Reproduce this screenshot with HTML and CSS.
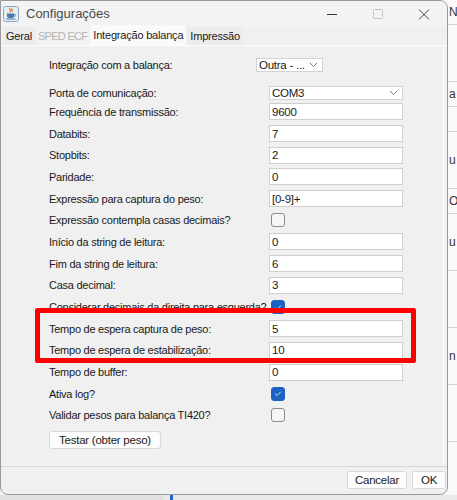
FILE: index.html
```html
<!DOCTYPE html>
<html>
<head>
<meta charset="utf-8">
<link rel="stylesheet" href="styles.css">
</head>
<body>
<div class="desktop">
  <div class="top">
    <div class="window">
      <div class="titlebar">
        <div class="appicon">
          <svg width="16" height="16" viewBox="0 0 16 16">
            <rect x="0.5" y="0.5" width="15" height="15" rx="2" fill="#e4ecf4" stroke="#8da6c0"/>
            <path d="M7 2 C6 3.5 8.5 4 7.2 6.2 M9 2.5 C8.2 3.7 10 4.2 9 5.8" stroke="#e0651b" stroke-width="1.1" fill="none"/>
            <path d="M4 7.5 H11 V10 C11 11.6 9.5 12 7.5 12 C5.5 12 4 11.6 4 10 Z" fill="#4a7ab0"/>
            <path d="M11 8.3 C13 8.2 13 10.5 10.8 10.6" stroke="#4a7ab0" stroke-width="1" fill="none"/>
            <path d="M3 13 H12.5" stroke="#4a7ab0" stroke-width="1"/>
          </svg>
        </div>
        <span class="title">Configurações</span>
        <div class="controls">
          <svg class="ctl" width="46" height="24" viewBox="0 0 46 24"><path d="M18 12.5 H28" stroke="#333" stroke-width="1"/></svg>
          <svg class="ctl" width="46" height="24" viewBox="0 0 46 24"><rect x="18.5" y="7.5" width="9" height="9" rx="1" fill="none" stroke="#c4c4c4"/></svg>
          <svg class="ctl" width="46" height="24" viewBox="0 0 46 24"><path d="M18 7.5 L28 17.5 M28 7.5 L18 17.5" stroke="#444" stroke-width="1"/></svg>
        </div>
      </div>
      <div class="tabs">
        <span class="tab">Geral</span>
        <span class="tab disabled">SPED ECF</span>
        <span class="tab active">Integração balança</span>
        <span class="tab">Impressão</span>
      </div>
      <div class="panel">
        <div class="row first">
          <span class="label wide">Integração com a balança:</span>
          <span class="combo small">Outra - ...<svg class="chev" width="9" height="6" viewBox="0 0 9 6"><path d="M1 1 L4.5 4.5 L8 1" stroke="#777" fill="none"/></svg></span>
        </div>
        <div class="form">
          <div class="row tight"><span class="label">Porta de comunicação:</span><span class="combo">COM3<svg class="chev" width="9" height="6" viewBox="0 0 9 6"><path d="M1 1 L4.5 4.5 L8 1" stroke="#777" fill="none"/></svg></span></div>
          <div class="row"><span class="label">Frequência de transmissão:</span><span class="field">9600</span></div>
          <div class="row"><span class="label">Databits:</span><span class="field">7</span></div>
          <div class="row"><span class="label">Stopbits:</span><span class="field">2</span></div>
          <div class="row"><span class="label">Paridade:</span><span class="field">0</span></div>
          <div class="row"><span class="label">Expressão para captura do peso:</span><span class="field">[0-9]+</span></div>
          <div class="row"><span class="label">Expressão contempla casas decimais?</span><span class="check"></span></div>
          <div class="row"><span class="label">Início da string de leitura:</span><span class="field">0</span></div>
          <div class="row"><span class="label">Fim da string de leitura:</span><span class="field">6</span></div>
          <div class="row"><span class="label">Casa decimal:</span><span class="field">3</span></div>
          <div class="row"><span class="label">Considerar decimais da direita para esquerda?</span><span class="check on"><svg width="13" height="13" viewBox="0 0 13 13"><path d="M3.5 6.8 L5.5 8.7 L9.5 4.6" stroke="#fff" stroke-width="0.9" fill="none"/></svg></span></div>
          <div class="row"><span class="label">Tempo de espera captura de peso:</span><span class="field">5</span></div>
          <div class="row"><span class="label">Tempo de espera de estabilização:</span><span class="field">10</span></div>
          <div class="row"><span class="label">Tempo de buffer:</span><span class="field">0</span></div>
          <div class="row"><span class="label">Ativa log?</span><span class="check on"><svg width="13" height="13" viewBox="0 0 13 13"><path d="M3.5 6.8 L5.5 8.7 L9.5 4.6" stroke="#fff" stroke-width="0.9" fill="none"/></svg></span></div>
          <div class="row"><span class="label">Validar pesos para balança TI420?</span><span class="check"></span></div>
        </div>
        <div class="testrow"><span class="btn test">Testar (obter peso)</span></div>
        <div class="highlight"></div>
      </div>
      <div class="footer">
        <span class="btn cancel">Cancelar</span>
        <span class="btn ok">OK</span>
      </div>
    </div>
    <div class="behind">
      <div class="bline">N</div>
      <div class="bline tall"></div>
      <div class="bline">a</div>
      <div class="bline"></div>
      <div class="bline tall">u</div>
      <div class="bline">O</div>
      <div class="bline tall">u</div>
      <div class="bline tall"></div>
      <div class="bline tall">n</div>
      <div class="bline tall"></div>
    </div>
  </div>
  <div class="bottom"><span class="mark"></span></div>
</div>
</body>
</html>
```
FILE: styles.css
```css
* { box-sizing: border-box; }
html, body { margin: 0; padding: 0; }
body {
  width: 457px;
  height: 500px;
  overflow: hidden;
  background: #f7f7f7;
  font-family: "Liberation Sans", Arial, sans-serif;
  font-size: 11px;
  letter-spacing: -0.25px;
  color: #1a1a1a;
}
.desktop { display: flex; flex-direction: column; height: 500px; }
.top { display: flex; height: 495px; }
.window {
  width: 448px;
  height: 495px;
  flex: none;
  display: flex;
  flex-direction: column;
  background: #f0f0f0;
  border: 1px solid #9a9a9a;
  border-radius: 0 8px 8px 8px;
  overflow: hidden;
  position: relative;
}
.titlebar {
  height: 25px;
  display: flex;
  align-items: center;
  background: #f3f3f3;
  flex: none;
}
.appicon { width: 16px; height: 16px; margin-left: 2px; display: flex; }
.title {
  margin-left: 7px;
  font-size: 13px;
  color: #4a4a4a;
  font-family: "Liberation Sans", sans-serif;
  letter-spacing: 0;
}
.controls { margin-left: auto; display: flex; }
.ctl { display: block; }
.tabs {
  height: 20px;
  display: flex;
  align-items: flex-end;
  padding-left: 2px;
  flex: none;
  border-bottom: 1px solid #fdfdfd;
}
.tab {
  height: 18px;
  padding: 0 3px;
  display: flex;
  align-items: center;
  background: #ececec;
  margin-right: 1px;
  font-size: 11px;
  letter-spacing: -0.2px;
  color: #1a1a1a;
}
.tab.disabled { color: #b4b4b4; background: #f2f2f2; letter-spacing: -0.7px; padding: 0 2px; }
.tab.active { height: 20px; background: #fafafa; }
.panel {
  flex: 1;
  position: relative;
  margin-right: 3px;
  border-right: 1px solid #fbfbfb;
  padding-top: 12px;
}
.row {
  display: flex;
  align-items: center;
  height: 21.7px;
}
.row.first { height: 14px; margin-bottom: 12px; }
.row.tight { height: 17px; }
.label {
  width: 268px;
  padding-left: 48px;
  flex: none;
  white-space: nowrap;
}
.label.wide { width: 255px; }
.field {
  width: 134px;
  height: 17px;
  background: #fff;
  border: 1px solid #cfcfcf;
  padding-left: 2px;
  display: flex;
  align-items: center;
  font-size: 11.5px;
}
.combo {
  width: 134px;
  height: 14px;
  background: #fff;
  border: 1px solid #d2d2d2;
  padding-left: 2px;
  display: flex;
  align-items: center;
  justify-content: space-between;
  padding-right: 4px;
  font-size: 11.5px;
}
.combo.small { width: 67px; }
.chev { display: block; }
.check {
  width: 14px;
  height: 14px;
  margin-left: 2px;
  border: 1px solid #8a8a8a;
  border-radius: 3px;
  background: #f6f6f6;
  display: flex;
  align-items: center;
  justify-content: center;
}
.check.on { background: #1a62c4; border-color: #1a62c4; }
.check svg { display: block; }
.testrow { padding-left: 48px; margin-top: 5px; }
.btn {
  display: inline-flex;
  align-items: center;
  justify-content: center;
  height: 18px;
  background: #fdfdfd;
  border: 1px solid #d8d8d8;
  border-radius: 3px;
  font-size: 11.5px;
  color: #1a1a1a;
}
.btn.test { width: 112px; }
.highlight {
  position: absolute;
  left: 34px;
  top: 262px;
  width: 381px;
  height: 55px;
  border: 5px solid #ff0000;
  border-radius: 2px;
}
.footer {
  height: 28px;
  flex: none;
  border-top: 1px solid #d8d8d8;
  display: flex;
  align-items: center;
  justify-content: flex-end;
  gap: 5px;
  padding-bottom: 2px;
}
.btn.cancel { width: 60px; }
.btn.ok { width: 34px; margin-right: 1px; }
.behind {
  flex: 1;
  display: flex;
  flex-direction: column;
  background: #fafafa;
  font-size: 12px;
  color: #333;
}
.bline {
  height: 25px;
  border-bottom: 1px solid #d4d4d4;
  display: flex;
  align-items: center;
  padding-left: 1px;
}
.bline.tall { height: 57px; }
.bottom {
  height: 5px;
  background: #e9e9e9;
  border-left: 163px solid #e0e0e0;
}
.mark { display: block; margin-left: 7px; width: 3px; height: 5px; background: #2563c9; }
```
